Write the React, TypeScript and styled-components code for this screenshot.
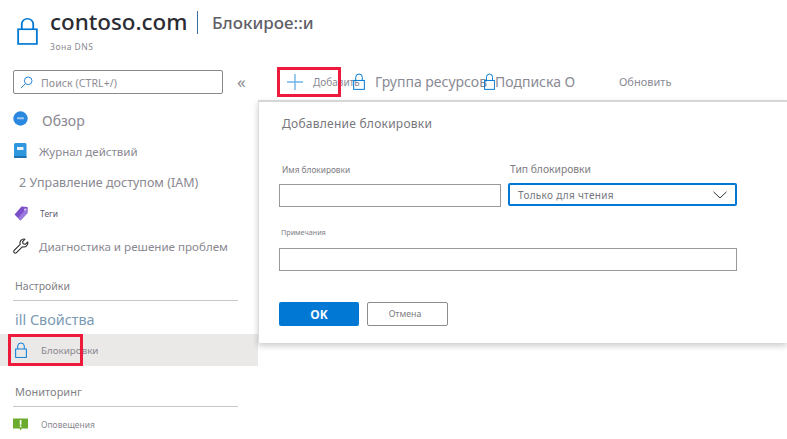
import React from "react";
import styled, { createGlobalStyle } from "styled-components";

const Global = createGlobalStyle`
  html, body { margin: 0; padding: 0; background: #fff; overflow: hidden; }
  * { box-sizing: border-box; }
  body { font-family: "Noto Sans", "Open Sans", "Liberation Sans", sans-serif; }
`;

const Page = styled.div`
  position: relative;
  width: 787px;
  height: 439px;
  overflow: hidden;
`;

const Header = styled.header`
  height: 66px;
  display: flex;
  padding: 9px 0 0 17px;
  gap: 9px;
`;

const HeaderIcon = styled.span`
  width: 24px;
  flex: none;
  padding-top: 8px;
`;

const TitleBlock = styled.div`
  display: flex;
  flex-direction: column;
`;

const TitleRow = styled.div`
  display: flex;
  align-items: center;
  height: 26px;
`;

const ResourceName = styled.h1`
  margin: 0;
  font-size: 22.4px;
  font-weight: 500;
  line-height: 26px;
  color: #2b2b33;
`;

const TitleBar = styled.span`
  width: 1.5px;
  height: 23px;
  background: #3a6f9f;
  margin: 0 14px 0 9px;
`;

const PageTitle = styled.span`
  font-size: 17px;
  font-weight: 500;
  color: #5f5f68;
`;

const Subtitle = styled.div`
  font-size: 8.5px;
  letter-spacing: 0.5px;
  color: #8a8a90;
  margin-top: 6px;
`;

const Body = styled.div`
  display: flex;
  height: 373px;
`;

const Sidebar = styled.aside`
  width: 258px;
  flex: none;
`;

const SearchRow = styled.div`
  display: flex;
  align-items: center;
  height: 24px;
  margin: 4px 0 0 13px;
`;

const SearchBox = styled.div`
  width: 210px;
  height: 24px;
  border: 1px solid #8a8a8a;
  border-radius: 2px;
  display: flex;
  align-items: center;
  padding-left: 6px;
  gap: 8px;
  font-size: 10.5px;
  letter-spacing: 0.1px;
  color: #8b8b92;
`;

const SearchText = styled.span`
  padding-top: 2px;
`;

const Collapse = styled.span`
  margin-left: 14px;
  font-size: 17px;
  line-height: 20px;
  color: #8a8a90;
`;

const NavList = styled.nav`
  display: flex;
  flex-direction: column;
  margin-top: 11px;
`;

const NavItem = styled.div<{ $h: number; $active?: boolean; $pad?: number; $top?: number }>`
  height: ${(p) => p.$h}px;
  display: flex;
  align-items: center;
  padding-left: ${(p) => p.$pad ?? 13}px;
  padding-top: ${(p) => p.$top ?? 0}px;
  background: ${(p) => (p.$active ? "#ebe9e7" : "transparent")};
`;

const IconSlot = styled.span<{ $w: number; $up?: number }>`
  width: ${(p) => p.$w}px;
  flex: none;
  display: flex;
  align-items: center;
  margin-top: ${(p) => -(p.$up ?? 0)}px;
`;

const NavText = styled.span<{ $size: number; $color?: string }>`
  font-size: ${(p) => p.$size}px;
  color: ${(p) => p.$color ?? "#8a8891"};
  white-space: nowrap;
`;

const SectionTitle = styled.div<{ $h: number; $size: number }>`
  height: ${(p) => p.$h}px;
  padding: 0 0 0 15px;
  display: flex;
  align-items: flex-end;
  font-size: ${(p) => p.$size}px;
  color: #7f7f84;
`;

const SectionRule = styled.div<{ $gap: number }>`
  height: 1px;
  width: 225px;
  margin: ${(p) => p.$gap}px 0 0 13px;
  background: #c8c8c8;
`;

const Main = styled.main`
  flex: 1;
  display: flex;
  flex-direction: column;
`;

const Toolbar = styled.div`
  height: 34px;
  display: flex;
  align-items: center;
  padding: 0 0 3px 29px;
`;

const ToolItem = styled.div<{ $w: number }>`
  width: ${(p) => p.$w}px;
  flex: none;
  display: flex;
  align-items: center;
  white-space: nowrap;
`;

const ToolText = styled.span<{ $size: number }>`
  font-size: ${(p) => p.$size}px;
  color: #8a8a95;
`;

const Panel = styled.section`
  height: 243px;
  border-top: 2px solid #d6d6d6;
  border-left: 1px solid #dedede;
  box-shadow: 0 3px 6px rgba(0, 0, 0, 0.2);
  padding: 13px 0 0 20px;
  background: #fff;
`;

const PanelTitle = styled.h2`
  margin: 0 0 0 3px;
  font-size: 12px;
  font-weight: 400;
  line-height: 17px;
  letter-spacing: 0.25px;
  color: #77777b;
`;

const FormGrid = styled.div`
  display: grid;
  grid-template-columns: 222px 229px;
  column-gap: 7px;
  margin-top: 29px;
`;

const FieldLabel = styled.label<{ $size: number; $inset: number; $gap?: number }>`
  display: flex;
  align-items: center;
  height: 16px;
  margin-bottom: ${(p) => p.$gap ?? 7}px;
  padding-left: ${(p) => p.$inset}px;
  font-size: ${(p) => p.$size}px;
  color: #7c7c84;
`;

const TextField = styled.div`
  height: 23px;
  border: 1px solid #999;
`;

const SelectField = styled.div`
  height: 23px;
  margin-top: -1px;
  border: 2px solid #0078d4;
  border-radius: 2px;
  display: flex;
  align-items: center;
  justify-content: space-between;
  padding: 0 8px 0 8px;
  font-size: 10px;
  letter-spacing: 0.3px;
  color: #77777d;
`;

const NotesBlock = styled.div`
  width: 458px;
  margin-top: 17px;
`;

const ButtonRow = styled.div`
  display: flex;
  gap: 8px;
  margin-top: 31px;
`;

const PrimaryButton = styled.button`
  width: 80px;
  height: 24px;
  border: 0;
  border-radius: 2px;
  padding: 0;
  background: #0078d4;
  color: #f4f9fd;
  font: 700 12px "Noto Sans", sans-serif;
`;

const SecondaryButton = styled.button`
  width: 81px;
  height: 24px;
  border: 1px solid #8c8c8c;
  border-radius: 2px;
  padding: 0 5px 0 0;
  background: #fff;
  color: #7c7c81;
  font: 400 8.8px "Noto Sans", sans-serif;
`;

const Callout = styled.div<{ $x: number; $y: number; $w: number; $h: number }>`
  position: absolute;
  left: ${(p) => p.$x}px;
  top: ${(p) => p.$y}px;
  width: ${(p) => p.$w}px;
  height: ${(p) => p.$h}px;
  border: 3px solid #ee1a3c;
  pointer-events: none;
`;

const Lock = ({ w, h, sw = 1.5 }: { w: number; h: number; sw?: number }) => (
  <svg width={w} height={h} viewBox="0 0 22 32" preserveAspectRatio="none" fill="none" stroke="#0078d4" strokeWidth={sw * (22 / w)}>
    <rect x="1.2" y="14" width="19.6" height="16.8" />
    <path d="M5 14V8a6 6 0 0 1 12 0v6" />
  </svg>
);

const DnsIcon = () => (
  <svg width="15" height="15" viewBox="0 0 15 15">
    <circle cx="7.5" cy="7.5" r="7.2" fill="#2b88e0" />
    <rect x="4" y="6.3" width="7" height="2" rx="0.5" fill="#9cc8f0" />
  </svg>
);

const LogIcon = () => (
  <svg width="13" height="15" viewBox="0 0 13 15">
    <rect x="0" y="0" width="12.5" height="15" rx="1.5" fill="#2f97dd" />
    <rect x="3" y="4" width="6.5" height="3" fill="#e8f4fc" />
    <rect x="0" y="13" width="12.5" height="2" fill="#1e73b3" />
  </svg>
);

const TagIcon = () => (
  <svg width="14" height="15" viewBox="0 0 14 15">
    <path d="M7.5 0.5 L13.5 1 L13.5 7 L6.5 14.5 L0.5 8.5 Z" fill="#7b4fc9" />
    <path d="M13.5 1 V7 L6.5 14.5 L4 12 Z" fill="#9b78dd" />
    <circle cx="11" cy="3.4" r="1" fill="#e6dcf7" />
  </svg>
);

const WrenchIcon = () => (
  <svg width="16" height="16" viewBox="0 0 16 16" fill="#fff" stroke="#2a2a2a" strokeWidth="1.1" strokeLinejoin="round">
    <path d="M10.6 1a4 4 0 0 0-3.4 5.4L1.2 12.4a1.6 1.6 0 0 0 2.3 2.3l6-6A4 4 0 0 0 14.8 4l-2.5 2.3-2.2-.6-.5-2.1L12 1.2A4 4 0 0 0 10.6 1Z" />
  </svg>
);

const AlertIcon = () => (
  <svg width="15" height="13" viewBox="0 0 15 13">
    <path d="M0 0.5 H15 V10.5 H8.5 L7.5 12.5 L6.5 10.5 H0 Z" fill="#6bab2d" />
    <rect x="6.8" y="2" width="1.6" height="4.8" fill="#fff" />
    <rect x="6.8" y="7.6" width="1.6" height="1.6" fill="#fff" />
  </svg>
);

const SearchIcon = () => (
  <svg width="13" height="13" viewBox="0 0 13 13" fill="none" stroke="#2b88d8" strokeWidth="1">
    <circle cx="8.2" cy="4.8" r="3.8" />
    <path d="M5.4 7.6 L0.8 12.2" />
  </svg>
);

const PlusIcon = () => (
  <svg width="16" height="16" viewBox="0 0 16 16" stroke="#6db5ea" strokeWidth="1.4">
    <path d="M8 0 V16 M0 8 H16" />
  </svg>
);

const Chevron = () => (
  <svg width="14" height="8" viewBox="0 0 14 8" fill="none" stroke="#333" strokeWidth="1">
    <path d="M0.5 0.8 L7 7 L13.5 0.8" />
  </svg>
);

export default function App() {
  return (
    <Page>
      <Global />
      <Header>
        <HeaderIcon>
          <Lock w={21} h={28} sw={1.8} />
        </HeaderIcon>
        <TitleBlock>
          <TitleRow>
            <ResourceName>contoso.com</ResourceName>
            <TitleBar />
            <PageTitle>Блокирое::и</PageTitle>
          </TitleRow>
          <Subtitle>Зона DNS</Subtitle>
        </TitleBlock>
      </Header>
      <Body>
        <Sidebar>
          <SearchRow>
            <SearchBox>
              <SearchIcon />
              <SearchText>Поиск (CTRL+/)</SearchText>
            </SearchBox>
            <Collapse>«</Collapse>
          </SearchRow>
          <NavList>
            <NavItem $h={31}>
              <IconSlot $w={29} $up={5}><DnsIcon /></IconSlot>
              <NavText $size={14}>Обзор</NavText>
            </NavItem>
            <NavItem $h={31} $pad={14}>
              <IconSlot $w={25} $up={2}><LogIcon /></IconSlot>
              <NavText $size={11.5}>Журнал действий</NavText>
            </NavItem>
            <NavItem $h={31} $pad={19}>
              <NavText $size={12.5}>2 Управление доступом (IAM)</NavText>
            </NavItem>
            <NavItem $h={31} $pad={14}>
              <IconSlot $w={26}><TagIcon /></IconSlot>
              <NavText $size={8.5} $color="#5f5a70">Теги</NavText>
            </NavItem>
            <NavItem $h={34}>
              <IconSlot $w={26}><WrenchIcon /></IconSlot>
              <NavText $size={11.6}>Диагностика и решение проблем</NavText>
            </NavItem>
            <SectionTitle $h={30} $size={10.5}>Настройки</SectionTitle>
            <SectionRule $gap={7} />
            <NavItem $h={33} $pad={15} $top={3}>
              <NavText $size={14.4} $color="#7a9ab3">ill Свойства</NavText>
            </NavItem>
            <NavItem $h={32} $active $pad={15}>
              <IconSlot $w={26}><Lock w={12} h={16} sw={1} /></IconSlot>
              <NavText $size={9.8}>Блокировки</NavText>
            </NavItem>
            <SectionTitle $h={33} $size={11}>Мониторинг</SectionTitle>
            <SectionRule $gap={7} />
            <NavItem $h={35} $pad={13}>
              <IconSlot $w={28}><AlertIcon /></IconSlot>
              <NavText $size={8.5}>Оповещения</NavText>
            </NavItem>
          </NavList>
        </Sidebar>
        <Main>
          <Toolbar>
            <ToolItem $w={26}><PlusIcon /></ToolItem>
            <ToolItem $w={40}><ToolText $size={10}>Добавить</ToolText></ToolItem>
            <ToolItem $w={22}><Lock w={12} h={17} sw={1} /></ToolItem>
            <ToolItem $w={109}><ToolText $size={14}>Группа ресурсов</ToolText></ToolItem>
            <ToolItem $w={11}><Lock w={12} h={17} sw={1} /></ToolItem>
            <ToolItem $w={124}><ToolText $size={14}>Подписка О</ToolText></ToolItem>
            <ToolItem $w={60}><ToolText $size={11}>Обновить</ToolText></ToolItem>
          </Toolbar>
          <Panel>
            <PanelTitle>Добавление блокировки</PanelTitle>
            <FormGrid>
              <div>
                <FieldLabel $size={8.3} $inset={3}>Имя блокировки</FieldLabel>
                <TextField />
              </div>
              <div>
                <FieldLabel $size={10.3} $inset={2}>Тип блокировки</FieldLabel>
                <SelectField>
                  <span>Только для чтения</span>
                  <Chevron />
                </SelectField>
              </div>
            </FormGrid>
            <NotesBlock>
              <FieldLabel $size={7.2} $inset={2} $gap={8}>Примечания</FieldLabel>
              <TextField />
            </NotesBlock>
            <ButtonRow>
              <PrimaryButton>OK</PrimaryButton>
              <SecondaryButton>Отмена</SecondaryButton>
            </ButtonRow>
          </Panel>
        </Main>
      </Body>
      <Callout $x={277} $y={67} $w={64} $h={30} />
      <Callout $x={8} $y={334} $w={75} $h={32} />
    </Page>
  );
}
